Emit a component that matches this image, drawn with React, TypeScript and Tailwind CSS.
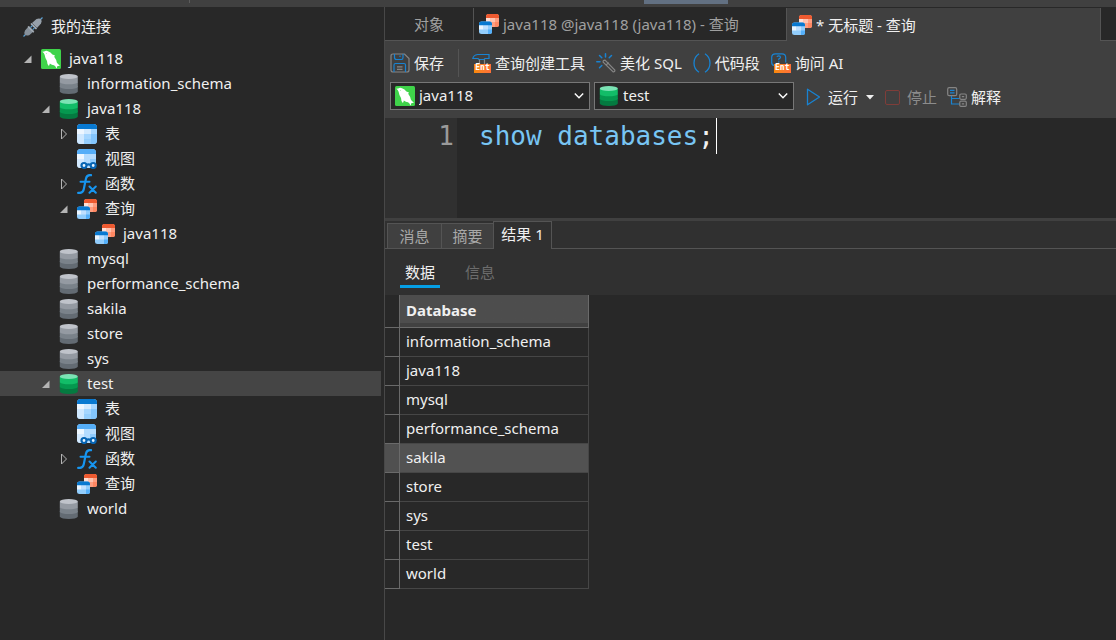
import React, { useState } from "react";

const FONT = "font-['Noto_Sans','Noto_Sans_CJK_SC',sans-serif]";

type IconProps = { className?: string };

function PlugIcon() {
  return (
    <svg viewBox="0 0 20 20" className="size-5" aria-hidden="true">
      <path d="M16.500 3.500 L19.500 0.500 M0.500 19.500 L3.500 16.500" stroke="#5b9fd0" strokeWidth="1.300" />
      <path d="M9 6 L13.500 2 Q16.500 0.800 18 2.200 Q19.400 4 18 6.500 L14 11 Z" fill="#96a0aa" />
      <path d="M6 9 L11 14 L6.500 18 Q3.500 19.200 2 17.800 Q0.600 16 2 13.500 Z" fill="#87919b" />
      <path d="M8 6.500 L13.500 12" stroke="#b0b8c0" strokeWidth="1.500" />
      <path d="M5 9.500 L10.800 15.200" stroke="#a4adb6" strokeWidth="1.400" />
      <path d="M7.500 10.500 L9.500 8.500 M9.700 12.700 L11.700 10.700" stroke="#5b9fd0" strokeWidth="1.100" />
    </svg>
  );
}

function DolphinIcon() {
  return (
    <svg viewBox="0 0 20 20" className="size-5 shrink-0" aria-hidden="true">
      <rect width="20" height="20" rx="1.500" fill="#3fd34a" />
      <path
        d="M1.200 2.800 L3.200 2.600 Q5 1.300 7 2.200 Q9.800 3.200 11.400 5.400 L14 6.600 L13.200 7.800 Q15.400 10.600 15.800 13.600 Q16.600 15.200 19 16.800 Q17 16.700 16.200 17.200 Q16.200 18.600 15.400 19.400 Q14.800 17.200 13 16.200 Q10.800 15.900 8.800 14.400 Q8.600 16 7.800 17 Q6 15 6 12 Q4.200 9.600 3.600 5.800 Q3 4 1.200 2.800 Z"
        fill="#fff"
      />
      <circle cx="5.500" cy="4.300" r="0.400" fill="#3fd34a" />
    </svg>
  );
}

function DatabaseIcon({ active }: { active?: boolean }) {
  const c = active ? ["#7be3b4", "#12bd68", "#05984f", "#047a40"] : ["#bfc3ca", "#949aa2", "#7a828a", "#636b73"];
  return (
    <svg viewBox="0 0 20 20" className="size-5 shrink-0" aria-hidden="true">
      <path d="M0.800 12 H18.800 V17.800 Q17 20 9.800 20 Q2.800 20 0.800 17.800 Z" fill={c[3]} />
      <path d="M0.800 8 H18.800 V13 Q17 15 9.800 15 Q2.800 15 0.800 13 Z" fill={c[2]} />
      <path d="M0.800 2.500 H18.800 V8.300 Q17 10.300 9.800 10.300 Q2.800 10.300 0.800 8.300 Z" fill={c[1]} />
      <ellipse cx="9.800" cy="2.600" rx="9" ry="2.500" fill={c[0]} />
    </svg>
  );
}

function TableIcon() {
  return (
    <svg viewBox="0 0 20 20" className="size-5 shrink-0" aria-hidden="true">
      <rect width="20" height="20" rx="3.500" fill="#a5d6ff" />
      <path d="M0 5 H7 V20 H3.500 Q0 20 0 16.500 Z" fill="#cfe8ff" />
      <path d="M0 5 H7 V10 H0 Z" fill="#edf6ff" />
      <path d="M7 5 H14 V10 H7 Z" fill="#d3eaff" />
      <path d="M14 10 H20 V16.500 Q20 20 16.500 20 H14 Z" fill="#83c5fc" />
      <path d="M7 15 H14 V20 H7 Z" fill="#95cefd" />
      <path d="M0 5 V3.500 Q0 0 3.500 0 H16.500 Q20 0 20 3.500 V5 Z" fill="#0879d1" />
    </svg>
  );
}

function ViewIcon() {
  return (
    <svg viewBox="0 0 20 20" className="size-5 shrink-0" aria-hidden="true">
      <rect width="19" height="19" rx="3.500" fill="#b4dcff" />
      <path d="M0 5 H7 V19 H3.500 Q0 19 0 15.500 Z" fill="#d4eaff" />
      <path d="M0 5 H7 V10 H0 Z" fill="#eef7ff" />
      <path d="M13 10 H19 V17 H13 Z" fill="#8fcbfd" />
      <path d="M0 5 V3.500 Q0 0 3.500 0 H15.500 Q19 0 19 3.500 V5 Z" fill="#55aef8" />
      <circle cx="7" cy="16.500" r="2.500" fill="#e8f4ff" stroke="#0765b4" strokeWidth="2.200" />
      <circle cx="16.200" cy="16.500" r="2.500" fill="#e8f4ff" stroke="#0765b4" strokeWidth="2.200" />
      <path d="M9.500 15.800 Q11.500 14.800 13.500 15.800" stroke="#0765b4" strokeWidth="2.200" fill="none" />
    </svg>
  );
}

function FunctionIcon() {
  return (
    <svg viewBox="0 0 20 20" className="size-5 shrink-0" fill="none" stroke="#1795ef" strokeLinecap="round" aria-hidden="true">
      <path d="M14 1.200 C10.800 0.600 9.600 1.800 9 4.500 L6.800 15 C6.200 18 4.500 19.400 1.200 18.800" strokeWidth="2.200" />
      <path d="M3.500 7.800 H12.500" strokeWidth="2" />
      <path d="M12.500 12.500 L18.800 18.800 M18.800 12.500 L12.500 18.800" strokeWidth="2" />
    </svg>
  );
}

function QueryIcon() {
  return (
    <svg viewBox="0 0 20 20" className="size-5 shrink-0" aria-hidden="true">
      <rect x="7" width="13" height="13" rx="2.500" fill="#ff9e80" />
      <path d="M7 4 H11.500 V8 H7 Z" fill="#ffe0d6" />
      <path d="M11.500 4 H16 V8 H11.500 Z" fill="#ffc3b0" />
      <path d="M16 8 H20 V10.500 Q20 13 17.500 13 H16 Z" fill="#ff8762" />
      <path d="M7 4 V2.500 Q7 0 9.500 0 H17.500 Q20 0 20 2.500 V4 Z" fill="#ee5a30" />
      <rect y="7.500" width="13" height="12.500" rx="2.500" fill="#92cdfc" />
      <path d="M0 11 H4.500 V15.500 H0 Z" fill="#eaf5ff" />
      <path d="M4.500 11 H9 V15.500 H4.500 Z" fill="#c0e0ff" />
      <path d="M9 15.500 H13 V17.500 Q13 20 10.500 20 H9 Z" fill="#55b0fa" />
      <path d="M0 11.300 V10 Q0 7.500 2.500 7.500 H10.500 Q13 7.500 13 10 V11.300 Z" fill="#0879d1" />
    </svg>
  );
}

function SaveIcon() {
  return (
    <svg viewBox="0 0 20 20" className="size-5" fill="none" strokeWidth="1.200" aria-hidden="true">
      <path d="M3 1 H14.500 L19 5.500 V17 Q19 19 17 19 H3 Q1 19 1 17 V3 Q1 1 3 1 Z" stroke="#858585" />
      <path d="M4.500 1 V4.500 Q4.500 6.500 6.500 6.500 H11.500 Q13 6.500 13 4.500 V1 M10 2.500 V4" stroke="#1883d2" />
      <path d="M4 19 V12 Q4 10.500 5.500 10.500 H14 Q15.500 10.500 15.500 12 V19" stroke="#1883d2" />
      <path d="M7 13.800 H12.500 M7 16.300 H12.500" stroke="#858585" />
    </svg>
  );
}

function EntBadge() {
  return (
    <span className="absolute right-0 bottom-0 flex h-[9px] w-[17px] items-center justify-center bg-linear-to-r from-[#f98a06] to-[#ff7038] font-['DejaVu_Sans_Mono',monospace] text-[8px] leading-none font-bold text-white">
      Ent
    </span>
  );
}

function BuilderIcon() {
  return (
    <span className="relative block size-5">
      <svg viewBox="0 0 20 20" className="size-5" fill="none" strokeWidth="1.200" aria-hidden="true">
        <path d="M6.500 1.500 H18 V5.500 H14 L13 6.500 H8 L7 5.500 H1.800 Q2.500 2 6.500 1.500 Z" stroke="#1883d2" />
        <path d="M8.500 6.500 V12 M13.500 6.500 V12" stroke="#858585" />
      </svg>
      <EntBadge />
    </span>
  );
}

function AskIcon() {
  return (
    <span className="relative block size-5">
      <svg viewBox="0 0 20 20" className="size-5" fill="none" stroke="#1883d2" strokeWidth="1.200" aria-hidden="true">
        <path d="M3 12.500 Q0.700 12 0.700 9.500 V4.500 Q0.700 0.800 4.500 0.800 H11 Q14.700 0.800 14.700 4.500 V9.500" />
        <path d="M6 4 Q6.200 2.800 7.700 2.800 Q9.500 2.800 9.500 4.200 Q9.500 5.200 7.800 6 V7.200 M7.800 8.200 V9.400" />
      </svg>
      <EntBadge />
    </span>
  );
}

function WandIcon() {
  return (
    <svg viewBox="0 0 20 20" className="size-5" fill="none" strokeLinecap="round" aria-hidden="true">
      <path
        d="M9.500 0.800 V4 M3.500 2.500 L5.800 4.800 M15.500 2.500 L13.200 4.800 M0.800 8.700 H4 M3.500 14.800 L5.800 12.500"
        stroke="#1883d2"
        strokeWidth="1.500"
      />
      <path d="M7.200 9.300 Q6.700 7.200 9 7.200 L18.800 17 Q19.200 18.900 17.200 18.900 Z" stroke="#858585" strokeWidth="1.200" />
      <path d="M10.300 11.800 L12.300 9.800" stroke="#858585" strokeWidth="1.200" />
    </svg>
  );
}

function ParenIcon() {
  return (
    <svg viewBox="0 0 18 20" className="h-5 w-[18px]" fill="none" stroke="#1883d2" strokeWidth="1.300" aria-hidden="true">
      <path d="M6 0.800 Q1 4 1 10 Q1 16 6 19.200 M12 0.800 Q17 4 17 10 Q17 16 12 19.200" />
    </svg>
  );
}

function RunIcon() {
  return (
    <svg viewBox="0 0 15 18" className="h-[18px] w-[15px]" fill="none" stroke="#1883d2" strokeWidth="1.300" aria-hidden="true">
      <path d="M1.500 1.200 L13.500 9 L1.500 16.800 Z" strokeLinejoin="round" />
    </svg>
  );
}

function ExplainIcon() {
  return (
    <svg viewBox="0 0 20 20" className="size-5" fill="none" strokeWidth="1.200" aria-hidden="true">
      <rect x="0.700" y="0.700" width="9" height="8" rx="1.500" stroke="#858585" />
      <path d="M3 3.300 H7.500 M3 5.800 H7.500" stroke="#1883d2" />
      <path d="M4.500 9 V17 H12.500 M4.500 11.500 H12.500" stroke="#1883d2" />
      <rect x="12.800" y="7" width="6.500" height="5.300" rx="1.200" stroke="#858585" />
      <rect x="12.800" y="14.200" width="6.500" height="5.200" rx="1.200" stroke="#858585" />
      <path d="M14.800 9.600 H17.200 M14.800 16.800 H17.200" stroke="#858585" />
    </svg>
  );
}

function ChevronIcon({ className }: IconProps) {
  return (
    <svg viewBox="0 0 10 8" className={className} fill="none" stroke="#fff" strokeWidth="1.400" aria-hidden="true">
      <path d="M0.800 1.500 L5 5.800 L9.200 1.500" />
    </svg>
  );
}

type Kind = "plug" | "server" | "db" | "dbOn" | "table" | "view" | "fn" | "query";

const ICONS: Record<Kind, React.ReactNode> = {
  plug: <PlugIcon />,
  server: <DolphinIcon />,
  db: <DatabaseIcon />,
  dbOn: <DatabaseIcon active />,
  table: <TableIcon />,
  view: <ViewIcon />,
  fn: <FunctionIcon />,
  query: <QueryIcon />,
};

type Node = { id: string; label: string; kind: Kind; depth: 1 | 2 | 3 | 4; arrow?: "open" | "closed" };

const NODES: Node[] = [
  { id: "conn", label: "java118", kind: "server", depth: 1, arrow: "open" },
  { id: "info", label: "information_schema", kind: "db", depth: 2 },
  { id: "java", label: "java118", kind: "dbOn", depth: 2, arrow: "open" },
  { id: "java-t", label: "表", kind: "table", depth: 3, arrow: "closed" },
  { id: "java-v", label: "视图", kind: "view", depth: 3 },
  { id: "java-f", label: "函数", kind: "fn", depth: 3, arrow: "closed" },
  { id: "java-q", label: "查询", kind: "query", depth: 3, arrow: "open" },
  { id: "java-q1", label: "java118", kind: "query", depth: 4 },
  { id: "mysql", label: "mysql", kind: "db", depth: 2 },
  { id: "perf", label: "performance_schema", kind: "db", depth: 2 },
  { id: "sakila", label: "sakila", kind: "db", depth: 2 },
  { id: "store", label: "store", kind: "db", depth: 2 },
  { id: "sys", label: "sys", kind: "db", depth: 2 },
  { id: "test", label: "test", kind: "dbOn", depth: 2, arrow: "open" },
  { id: "test-t", label: "表", kind: "table", depth: 3 },
  { id: "test-v", label: "视图", kind: "view", depth: 3 },
  { id: "test-f", label: "函数", kind: "fn", depth: 3, arrow: "closed" },
  { id: "test-q", label: "查询", kind: "query", depth: 3 },
  { id: "world", label: "world", kind: "db", depth: 2 },
];

const INDENT = { 1: "pl-[23px]", 2: "pl-[41px]", 3: "pl-[59px]", 4: "pl-[77px]" };

function Arrow({ state }: { state?: "open" | "closed" }) {
  return (
    <span className="flex w-[18px] shrink-0">
      {state === "open" && (
        <svg viewBox="0 0 10 10" className="size-[10px]" aria-hidden="true">
          <path d="M8.500 1.500 V9 H1 Z" fill="#b4b4b4" />
        </svg>
      )}
      {state === "closed" && (
        <svg viewBox="0 0 10 12" className="h-3 w-[10px]" fill="none" stroke="#b4b4b4" aria-hidden="true">
          <path d="M2.500 1 L7.500 6 L2.500 11 Z" />
        </svg>
      )}
    </span>
  );
}

function Sidebar() {
  const [selected, setSelected] = useState("test");
  return (
    <nav aria-label="我的连接" className="w-[385px] shrink-0 border-r border-[#484848] pr-[3px]">
      <div className="flex h-[39px] items-center gap-2 pl-[23px]">
        {ICONS.plug}
        <span className="pb-[2px]">我的连接</span>
      </div>
      <ul role="tree">
        {NODES.map((n) => (
          <li
            key={n.id}
            role="treeitem"
            aria-level={n.depth}
            aria-selected={selected === n.id}
            onClick={() => setSelected(n.id)}
            className={`flex h-[25px] items-center ${INDENT[n.depth]} ${selected === n.id ? "bg-[#454545]" : ""}`}
          >
            <Arrow state={n.arrow} />
            {ICONS[n.kind]}
            <span className="ml-2 pb-[2px] whitespace-nowrap">{n.label}</span>
          </li>
        ))}
      </ul>
    </nav>
  );
}

function Tool({ icon, children }: { icon: React.ReactNode; children: React.ReactNode }) {
  return (
    <button type="button" className="flex items-center gap-1 whitespace-nowrap">
      {icon}
      {children}
    </button>
  );
}

function Picker({ label, icon, options }: { label: string; icon: React.ReactNode; options: string[] }) {
  return (
    <label className="relative block w-[200px]">
      <span className="pointer-events-none absolute top-1 left-[5px]">{icon}</span>
      <select
        aria-label={label}
        className="block h-7 w-full appearance-none border border-[#777] bg-[#282828] pb-[2px] pl-7 text-[15px] leading-5 text-[#f0f0f0] outline-none"
      >
        {options.map((o) => (
          <option key={o}>{o}</option>
        ))}
      </select>
      <ChevronIcon className="pointer-events-none absolute top-[10px] right-[6px] h-2 w-[10px]" />
    </label>
  );
}

const ROWS = ["information_schema", "java118", "mysql", "performance_schema", "sakila", "store", "sys", "test", "world"];

function ResultGrid() {
  return (
    <table className="border-separate border-spacing-0 self-start">
      <thead>
        <tr className="h-[33px]">
          <td className="w-[15px] border-r border-b border-[#6a6a6a] p-0" />
          <th
            scope="col"
            className="w-[189px] border-r border-b border-[#6a6a6a] bg-linear-to-b from-[#4d4d4d] from-88% to-[#414141] to-88% px-[6px] pb-[2px] text-left font-bold"
          >
            Database
          </th>
        </tr>
      </thead>
      <tbody>
        {ROWS.map((r) => {
          const on = r === "sakila";
          return (
            <tr key={r} className="h-[29px]">
              <td className={`border-r border-b border-[#6a6a6a] p-0 ${on ? "bg-[#505050]" : ""}`} />
              <td className={`border-r border-b border-[#464646] px-[6px] pb-[2px] ${on ? "bg-[#525252]" : ""}`}>{r}</td>
            </tr>
          );
        })}
      </tbody>
    </table>
  );
}

export default function App() {
  return (
    <div className={`flex min-h-screen flex-col bg-[#282828] text-[15px] leading-5 text-[#f0f0f0] ${FONT}`}>
      <header className="flex h-[7px] shrink-0 bg-[#404040]">
        <div className="h-[3px] w-[190px] border-r border-[#5c5c5c]" />
        <div className="ml-[454px] h-1 w-[84px] bg-[#627082]" />
      </header>
      <div className="flex flex-1">
        <Sidebar />
        <main className="flex min-w-0 flex-1 flex-col border-t border-[#282828]">
          <div role="tablist" aria-label="文档" className="flex h-[33px] shrink-0 text-[#a0a0a0]">
            <button role="tab" type="button" className="w-[89px] border-r border-b border-[#545454]">
              对象
            </button>
            <button
              role="tab"
              type="button"
              className="flex w-[312px] items-center gap-1 border-b border-[#545454] pl-[5px] whitespace-nowrap"
            >
              <QueryIcon />
              java118 @java118 (java118) - 查询
            </button>
            <button
              role="tab"
              type="button"
              aria-selected="true"
              className="flex w-[315px] items-center gap-1 border-x border-[#545454] bg-[#404040] pl-[5px] whitespace-nowrap text-[#f0f0f0]"
            >
              <QueryIcon />* 无标题 - 查询
            </button>
            <div className="flex-1 border-b border-[#545454]" />
          </div>

          <div className="shrink-0 bg-[#404040] px-[5px] pb-2">
            <div role="toolbar" aria-label="查询工具" className="flex h-[41px] items-center gap-[10px] pt-[2px]">
              <Tool icon={<SaveIcon />}>保存</Tool>
              <span className="ml-1 h-7 w-px bg-[#545454]" />
              <div className="flex items-center gap-[11px] pl-[2px]">
                <Tool icon={<BuilderIcon />}>查询创建工具</Tool>
                <Tool icon={<WandIcon />}>美化 SQL</Tool>
                <Tool icon={<ParenIcon />}>代码段</Tool>
                <Tool icon={<AskIcon />}>询问 AI</Tool>
              </div>
            </div>
            <div className="flex h-7 items-center">
              <Picker label="连接" icon={<DolphinIcon />} options={["java118"]} />
              <div className="ml-1">
                <Picker label="数据库" icon={<DatabaseIcon active />} options={["test", "sakila", "world"]} />
              </div>
              <div className="flex items-center gap-[10px] pt-[2px] pl-3">
                <button type="button" className="flex items-center gap-[7px]">
                  <RunIcon />
                  运行
                  <svg viewBox="0 0 10 6" className="h-[6px] w-[10px]" aria-hidden="true">
                    <path d="M1 1 H9 L5 5.500 Z" fill="#f0f0f0" />
                  </svg>
                </button>
                <button type="button" disabled className="flex items-center gap-[7px] text-[#8c8c8c]">
                  <svg viewBox="0 0 15 15" className="size-[15px]" fill="none" stroke="#7f3d39" aria-hidden="true">
                    <rect x="0.500" y="0.500" width="14" height="14" rx="1.500" />
                  </svg>
                  停止
                </button>
                <Tool icon={<ExplainIcon />}>解释</Tool>
              </div>
            </div>
          </div>

          <div className="flex h-[100px] shrink-0 font-['DejaVu_Sans_Mono',monospace] text-[26px] leading-9">
            <div className="w-[72px] shrink-0 bg-[#303030] pr-[3px] text-right text-[#9a9a9a]">1</div>
            <div
              role="textbox"
              aria-label="SQL"
              aria-multiline="true"
              contentEditable
              suppressContentEditableWarning
              spellCheck={false}
              className="flex flex-1 pl-[22px] whitespace-pre outline-none"
            >
              <span className="text-[#78c5f3]">show databases</span>
              <span>;</span>
              <span className="ml-[2px] h-9 w-px bg-white" />
            </div>
          </div>

          <section className="flex flex-1 flex-col border-t-3 border-[#404040]">
            <div className="bg-[#303030]">
              <div role="tablist" aria-label="结果" className="flex h-7 items-stretch text-[#a8a8a8]">
                <div className="w-[2px] border-b border-[#545454]" />
                <button role="tab" type="button" className="mt-[2px] w-[55px] border border-[#545454] bg-[#404040]">
                  消息
                </button>
                <button role="tab" type="button" className="mt-[2px] w-[51px] border-y border-[#545454] bg-[#404040]">
                  摘要
                </button>
                <button
                  role="tab"
                  type="button"
                  aria-selected="true"
                  className="w-[59px] border-x border-t border-[#545454] pb-1 text-[#f0f0f0]"
                >
                  结果 1
                </button>
                <div className="flex-1 border-b border-[#545454]" />
              </div>
              <div role="tablist" aria-label="视图" className="flex h-[46px] items-start gap-5 pt-[9px] pl-[15px]">
                <button role="tab" type="button" aria-selected="true" className="h-[30px] w-10 border-b-3 border-[#059fe5]">
                  数据
                </button>
                <button role="tab" type="button" className="h-[30px] w-10 border-b-3 border-transparent text-[#6c6c6c]">
                  信息
                </button>
              </div>
            </div>
            <ResultGrid />
          </section>
        </main>
      </div>
    </div>
  );
}
